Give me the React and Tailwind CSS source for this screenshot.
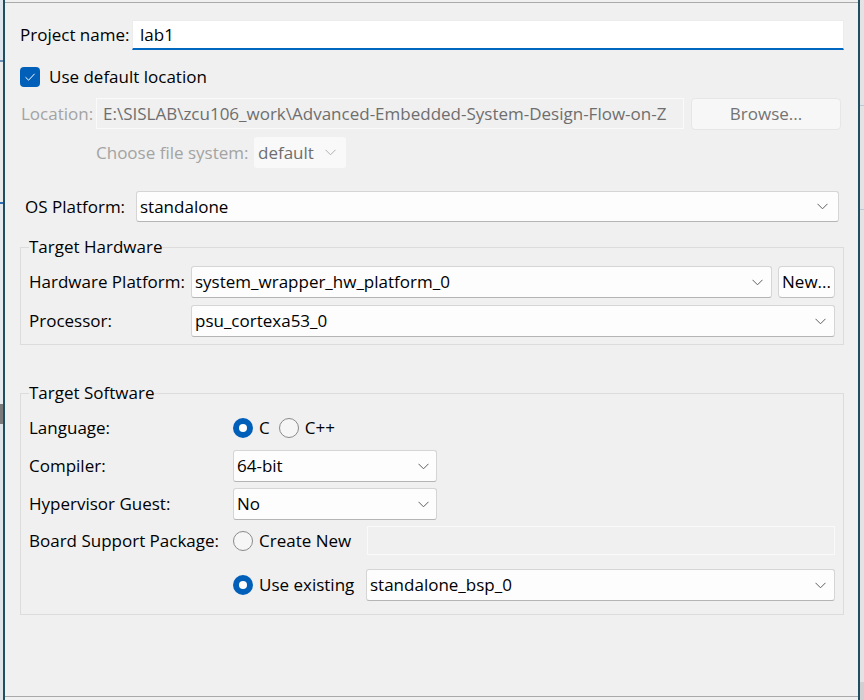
import React from "react";

const Chevron = ({ color = "#5f5f5f" }) => (
  <svg width="11" height="7" viewBox="0 0 11 7" className="shrink-0">
    <path d="M0.5 0.8 L5.5 5.8 L10.5 0.8" fill="none" stroke={color} strokeWidth="1" />
  </svg>
);

const Select = ({ value, className = "", pr = "pr-[12px]" }) => (
  <div
    className={`flex items-center justify-between h-full bg-[#fdfdfd] border border-[#d5d5d5] border-b-[#b5b5b5] rounded-[3px] pl-[3px] ${pr} ${className}`}
  >
    <span>{value}</span>
    <Chevron />
  </div>
);

const Radio = ({ checked }) =>
  checked ? (
    <span className="w-[20px] h-[20px] rounded-full bg-[#005fb8] flex items-center justify-center shrink-0">
      <span className="w-[8px] h-[8px] rounded-full bg-white" />
    </span>
  ) : (
    <span className="block w-[20px] h-[20px] rounded-full border border-[#8a8a8a] bg-[#f6f6f6] shrink-0" />
  );

const App = () => {
  return (
    <div
      className="w-[864px] h-[700px] flex bg-[#f0f0f0] text-[17px] leading-[24px] text-black overflow-hidden"
      style={{ fontFamily: '"Open Sans", "Noto Sans", sans-serif' }}
    >
      {/* background window sliver, left */}
      <div className="w-[3px] h-full bg-[#e4e8ec] flex flex-col">
        <div className="h-[60px] bg-[#dfe6ee]" />
        <div className="h-[2px] bg-[#6b8fb5]" />
        <div className="h-[140px] bg-[#eaeaea]" />
        <div className="h-[2px] bg-[#2f6fb0]" />
        <div className="h-[200px] bg-[#e6e9ee]" />
        <div className="h-[20px] bg-[#7a7a7a]" />
        <div className="flex-1 bg-[#dfe4ea]" />
      </div>
      <div className="w-[2px] h-full bg-[#1f4e61]" />

      {/* dialog */}
      <div className="flex-1 h-full flex flex-col">
        <div className="h-[2px]" />
        <div className="h-[1px] bg-[#a9a9a9]" />

        <div className="flex-1 flex flex-col pt-[17px] pl-[15px] pr-[14px]">
          {/* project name */}
          <div className="flex items-center h-[30px]">
            <span className="w-[112px]">Project name:</span>
            <div className="flex-1 h-full bg-white border border-[#ececec] border-b-2 border-b-[#0067c0] flex items-center pl-[7px]">
              lab1
            </div>
          </div>

          {/* default location */}
          <div className="flex items-center h-[20px] mt-[17px]">
            <span className="w-[20px] h-[20px] rounded-[4px] bg-[#005fb8] flex items-center justify-center">
              <svg width="12" height="10" viewBox="0 0 12 10">
                <path d="M1.5 5.2 L4.6 8.2 L10.6 1.8" fill="none" stroke="white" strokeWidth="1" />
              </svg>
            </span>
            <span className="ml-[9px]">Use default location</span>
          </div>

          {/* location */}
          <div className="flex items-center h-[31px] mt-[11px] text-[#a3a3a3]">
            <span className="w-[76px] pl-[1px]">Location:</span>
            <div className="w-[588px] h-full border border-[#fafafa] bg-[#f0f0f0] flex items-center pl-[6px] text-[#6e6e6e] whitespace-nowrap overflow-hidden">
              E:\SISLAB\zcu106_work\Advanced-Embedded-System-Design-Flow-on-Z
            </div>
            <div className="ml-[7px] w-[150px] h-[32px] rounded-[4px] bg-[#f7f7f7] border border-[#e6e6e6] flex items-center justify-center text-[#737373]">
              Browse...
            </div>
          </div>

          {/* file system */}
          <div className="flex items-center h-[31px] mt-[8px] pl-[76px] text-[#a3a3a3]">
            <span className="w-[158px]">Choose file system:</span>
            <div className="w-[92px] h-full rounded-[3px] bg-[#f9f9f9] flex items-center justify-between pl-[4px] pr-[10px] text-[#6e6e6e]">
              <span>default</span>
              <Chevron color="#b0b0b0" />
            </div>
          </div>

          {/* os platform */}
          <div className="flex items-center h-[31px] mt-[23px] pr-[5px]">
            <span className="w-[116px] pl-[5px]">OS Platform:</span>
            <Select value="standalone" className="flex-1" pr="pr-[10px]" />
          </div>

          {/* target hardware */}
          <fieldset className="mt-[14px] border border-[#dcdcdc] pl-[8px] pr-[8px] pb-[7px]">
            <legend className="leading-[22px]">Target Hardware</legend>
            <div className="flex items-center h-[32px] mt-[8px]">
              <span className="w-[162px]">Hardware Platform:</span>
              <Select value="system_wrapper_hw_platform_0" className="flex-1" pr="pr-[8px]" />
              <div className="ml-[6px] w-[57px] h-full rounded-[4px] bg-[#fdfdfd] border border-[#d5d5d5] border-b-[#bdbdbd] flex items-center justify-center">
                New...
              </div>
            </div>
            <div className="flex items-center h-[32px] mt-[7px]">
              <span className="w-[162px]">Processor:</span>
              <Select value="psu_cortexa53_0" className="flex-1" pr="pr-[8px]" />
            </div>
          </fieldset>

          {/* target software */}
          <fieldset className="mt-[37px] border border-[#dcdcdc] pl-[8px] pr-[8px] pb-[13px]">
            <legend className="leading-[22px]">Target Software</legend>
            <div className="flex items-center h-[24px] mt-[12px]">
              <span className="w-[204px]">Language:</span>
              <Radio checked />
              <span className="ml-[6px]">C</span>
              <span className="ml-[9px] flex">
                <Radio />
              </span>
              <span className="ml-[6px]">C++</span>
            </div>
            <div className="flex items-center h-[32px] mt-[10px]">
              <span className="w-[204px]">Compiler:</span>
              <Select value="64-bit" className="w-[204px]" pr="pr-[7px]" />
            </div>
            <div className="flex items-center h-[32px] mt-[6px]">
              <span className="w-[204px]">Hypervisor Guest:</span>
              <Select value="No" className="w-[204px]" pr="pr-[7px]" />
            </div>
            <div className="flex items-center h-[29px] mt-[6px]">
              <span className="w-[204px]">Board Support Package:</span>
              <Radio />
              <span className="ml-[6px] w-[108px]">Create New</span>
              <div className="flex-1 h-full border border-[#fafafa] bg-[#f0f0f0]" />
            </div>
            <div className="flex items-center h-[32px] mt-[14px]">
              <span className="w-[204px]" />
              <Radio checked />
              <span className="ml-[6px] w-[107px]">Use existing</span>
              <Select value="standalone_bsp_0" className="flex-1" pr="pr-[8px]" />
            </div>
          </fieldset>
        </div>

        <div className="h-[1px] bg-[#a9a9a9]" />
        <div className="h-[3px]" />
      </div>

      {/* background window sliver, right */}
      <div className="w-[2px] h-full bg-[#1f4e61]" />
      <div className="w-[4px] h-full bg-[#e3e3e3] flex flex-col">
        <div className="h-[105px]" />
        <div className="h-[1px] bg-[#b9c9da]" />
        <div className="h-[103px]" />
        <div className="h-[1px] bg-[#b9c9da]" />
        <div className="flex-1" />
        <div className="h-[18px] bg-[#d0d0d0]" />
      </div>
    </div>
  );
};

export default App;
